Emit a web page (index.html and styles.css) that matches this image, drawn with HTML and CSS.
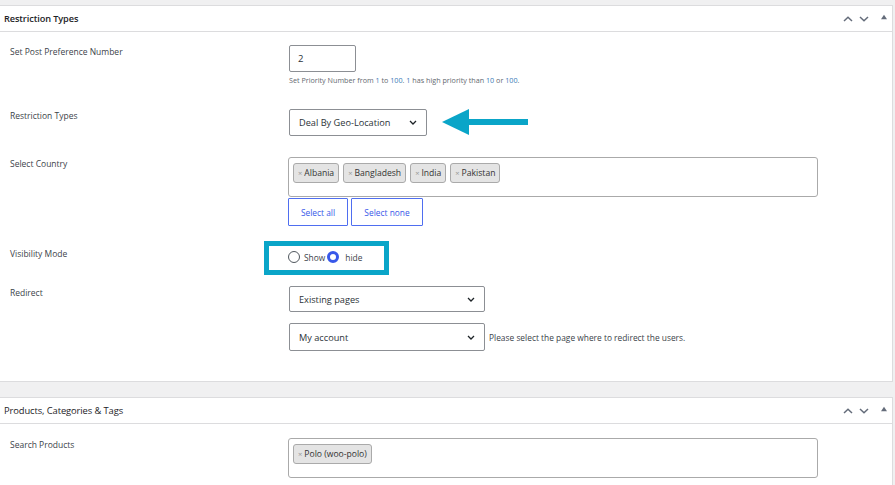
FILE: index.html
```html
<!DOCTYPE html>
<html>
<head>
<meta charset="utf-8">
<link rel="stylesheet" href="styles.css">
</head>
<body>
<div class="page">
  <section class="postbox">
    <div class="hndle">
      <h2>Restriction Types</h2>
      <div class="actions">
        <svg class="ic" width="12" height="8" viewBox="0 0 12 8"><polyline points="2,6 6,2.2 10,6" fill="none" stroke="#646c7a" stroke-width="1.5"/></svg>
        <svg class="ic" width="12" height="8" viewBox="0 0 12 8"><polyline points="2,2 6,5.8 10,2" fill="none" stroke="#646c7a" stroke-width="1.5"/></svg>
        <svg class="ic tri" width="8" height="6" viewBox="0 0 8 6"><polygon points="4,0.8 7,5.2 1,5.2" fill="#646c7a"/></svg>
      </div>
    </div>
    <div class="inside">
      <div class="row r1">
        <div class="label">Set Post Preference Number</div>
        <div class="field">
          <div class="num">2</div>
          <p class="help">Set Priority Number from <span class="n">1</span> to <span class="n">100</span>. <span class="n">1</span> has high priority than <span class="n">10</span> or <span class="n">100</span>.</p>
        </div>
      </div>
      <div class="row r2">
        <div class="label">Restriction Types</div>
        <div class="field arrow-host">
          <div class="select geo"><span>Deal By Geo-Location</span><svg width="8" height="5" viewBox="0 0 8 5"><polyline points="1,1 4,4 7,1" fill="none" stroke="#1d2327" stroke-width="1.3"/></svg></div>
          <svg class="arrow" width="88" height="28" viewBox="0 0 88 28"><polygon points="0,14 27,1 27,27" fill="#0aa5c8"/><rect x="26" y="11" width="60" height="6" fill="#0aa5c8"/></svg>
        </div>
      </div>
      <div class="row r3">
        <div class="label">Select Country</div>
        <div class="field">
          <div class="multi">
            <span class="tag"><span class="x">×</span>Albania</span>
            <span class="tag"><span class="x">×</span>Bangladesh</span>
            <span class="tag"><span class="x">×</span>India</span>
            <span class="tag"><span class="x">×</span>Pakistan</span>
          </div>
          <div class="btns">
            <span class="btn all">Select all</span>
            <span class="btn none">Select none</span>
          </div>
        </div>
      </div>
      <div class="row r4">
        <div class="label">Visibility Mode</div>
        <div class="field radios">
          <span class="radio"></span><span class="rl">Show</span>
          <span class="radio on"></span><span class="rl hide">hide</span>
          <span class="callout"></span>
        </div>
      </div>
      <div class="row r5">
        <div class="label">Redirect</div>
        <div class="field">
          <div class="select wide"><span>Existing pages</span><svg width="8" height="5" viewBox="0 0 8 5"><polyline points="1,1 4,4 7,1" fill="none" stroke="#1d2327" stroke-width="1.3"/></svg></div>
          <div class="line2">
            <div class="select wide tall"><span>My account</span><svg width="8" height="5" viewBox="0 0 8 5"><polyline points="1,1 4,4 7,1" fill="none" stroke="#1d2327" stroke-width="1.3"/></svg></div>
            <span class="desc">Please select the page where to redirect the users.</span>
          </div>
        </div>
      </div>
    </div>
  </section>

  <section class="postbox second">
    <div class="hndle">
      <h2 class="light">Products, Categories &amp; Tags</h2>
      <div class="actions">
        <svg class="ic" width="12" height="8" viewBox="0 0 12 8"><polyline points="2,6 6,2.2 10,6" fill="none" stroke="#646c7a" stroke-width="1.5"/></svg>
        <svg class="ic" width="12" height="8" viewBox="0 0 12 8"><polyline points="2,2 6,5.8 10,2" fill="none" stroke="#646c7a" stroke-width="1.5"/></svg>
        <svg class="ic tri" width="8" height="6" viewBox="0 0 8 6"><polygon points="4,0.8 7,5.2 1,5.2" fill="#646c7a"/></svg>
      </div>
    </div>
    <div class="inside">
      <div class="row r6">
        <div class="label">Search Products</div>
        <div class="field">
          <div class="multi">
            <span class="tag"><span class="x">×</span>Polo (woo-polo)</span>
          </div>
        </div>
      </div>
    </div>
  </section>
</div>
</body>
</html>
```

FILE: styles.css
```css
html, body {
  margin: 0;
  padding: 0;
  background: #f0f0f1;
  font-family: "Open Sans", "Noto Sans", sans-serif;
  color: #3c434a;
  overflow: hidden;
}

.page {
  padding-top: 5px;
  height: 480px;
}

.postbox {
  background: #fff;
  border: 1px solid #dcdcde;
  margin-left: -1px;
  margin-right: 2px;
}

.postbox.second {
  margin-top: 15px;
}

.hndle {
  height: 25px;
  border-bottom: 1px solid #dcdcde;
  display: flex;
  align-items: center;
  justify-content: space-between;
  padding-left: 4px;
}

.hndle h2 {
  margin: 0;
  font-size: 9.2px;
  font-weight: 600;
  color: #1d2327;
  letter-spacing: -0.1px;
}

.hndle h2.light {
  font-weight: 500;
  font-size: 9.4px;
}

.actions {
  display: flex;
  align-items: center;
  gap: 4px;
  padding-right: 4px;
}

.actions .tri {
  margin-left: 6px;
  margin-top: -3px;
}

.inside {
  padding-bottom: 30px;
}

.second .inside {
  padding-bottom: 10px;
}

.row {
  display: grid;
  grid-template-columns: 288px 1fr;
}

.label {
  padding-left: 10px;
  font-size: 8.5px;
  line-height: 14px;
  color: #3c434a;
}

.r1 { padding-top: 13px; }
.r2 { padding-top: 24px; }
.r3 { padding-top: 21px; }
.r4 { padding-top: 21px; }
.r5 { padding-top: 22px; }
.r6 { padding-top: 14px; }

.num {
  width: 57px;
  height: 25px;
  margin-left: 1px;
  border: 1px solid #8c8f94;
  border-radius: 2px;
  font-size: 9.5px;
  line-height: 25px;
  padding-left: 8px;
  color: #2c3338;
}

.help {
  margin: 3px 0 0 1px;
  font-size: 7.2px;
  line-height: 10px;
  color: #646970;
}

.help .n {
  color: #3a7bb8;
}

.arrow-host {
  position: relative;
}

.select {
  box-sizing: border-box;
  margin-left: 1px;
  border: 1px solid #8c8f94;
  border-radius: 2px;
  height: 27px;
  display: flex;
  align-items: center;
  justify-content: space-between;
  padding: 0 9px 0 9px;
  font-size: 9.2px;
  color: #2c3338;
}

.select.geo {
  width: 138px;
}

.select.wide {
  width: 196px;
  height: 26px;
}

.select.wide.tall {
  height: 28px;
}

.arrow {
  position: absolute;
  left: 154px;
  top: -1px;
}

.multi {
  box-sizing: border-box;
  width: 530px;
  height: 40px;
  border: 1px solid #aaa;
  border-radius: 3px;
  padding: 5px 4px 0;
  display: flex;
  gap: 4px;
  align-items: flex-start;
}

.tag {
  box-sizing: border-box;
  height: 20px;
  background: #e4e4e4;
  border: 1px solid #aaa;
  border-radius: 3px;
  padding: 0 4px 0 4px;
  font-size: 8.6px;
  line-height: 18px;
  color: #333;
}

.tag .x {
  color: #999;
  margin-right: 2px;
  font-size: 7.5px;
}

.btns {
  display: flex;
  gap: 3px;
  margin-top: 1px;
}

.btn {
  box-sizing: border-box;
  height: 28px;
  border: 1px solid #4f6ef0;
  border-radius: 1px;
  display: flex;
  align-items: center;
  justify-content: center;
  font-size: 8.4px;
  color: #3858e9;
}

.btn.all { width: 60px; }
.btn.none { width: 72px; }

.radios {
  position: relative;
  display: flex;
  align-items: center;
  height: 14px;
  padding-top: 3px;
}

.radio {
  box-sizing: border-box;
  width: 12px;
  height: 12px;
  border-radius: 50%;
  border: 1px solid #50575e;
}

.radio.on {
  border: 3.5px solid #3858e9;
  margin-left: 2px;
}

.rl {
  font-size: 8.4px;
  color: #3c434a;
  margin-left: 4px;
}

.rl.hide {
  margin-left: 6px;
}

.callout {
  position: absolute;
  left: -24px;
  top: -6px;
  width: 115px;
  height: 24px;
  border: 5px solid #0aa5c8;
}

.line2 {
  display: flex;
  align-items: center;
  margin-top: 11px;
}

.desc {
  font-size: 8.4px;
  color: #3c434a;
  margin-left: 4px;
}
```
